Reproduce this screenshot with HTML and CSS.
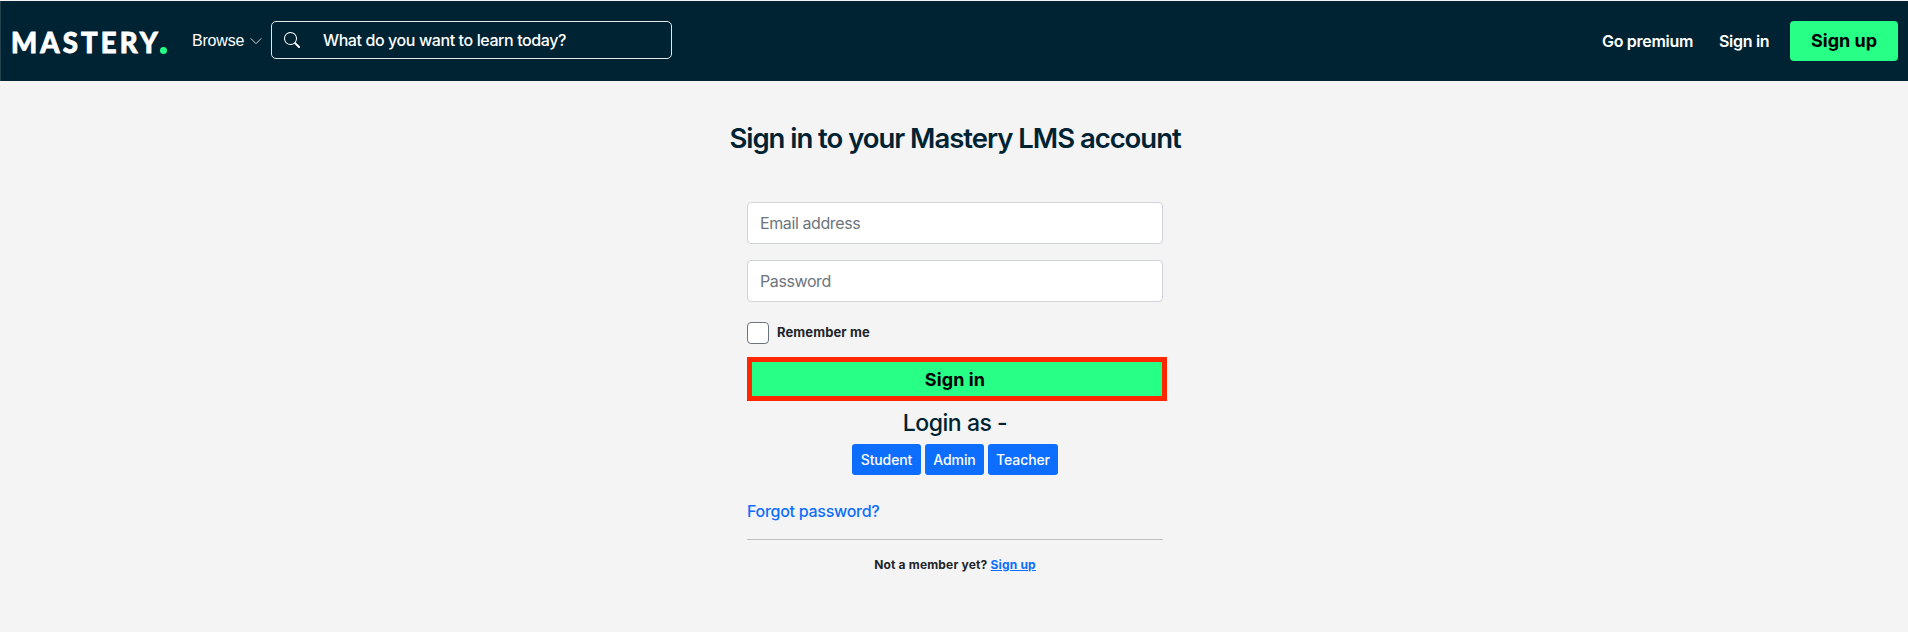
FILE: index.html
```html
<!DOCTYPE html>
<html lang="en">
<head>
<meta charset="utf-8">
<title>Mastery LMS - Sign in</title>
<link rel="stylesheet" href="styles.css">
</head>
<body>
<header class="navbar">
  <a class="brand">MASTERY<span class="brand-dot"></span></a>
  <a class="browse">Browse
    <svg class="chevron" width="12" height="12" viewBox="0 0 16 16" fill="none" stroke="currentColor" stroke-width="1.1" stroke-linecap="round" stroke-linejoin="round"><path d="M1.5 5 8 11.5 14.500 5"/></svg>
  </a>
  <div class="search">
    <svg width="16" height="16" viewBox="0 0 16 16" fill="currentColor"><path d="M11.742 10.344a6.500 6.500 0 1 0-1.397 1.398h-.001c.03.04.062.078.098.115l3.850 3.850a1 1 0 0 0 1.415-1.414l-3.850-3.850a1.007 1.007 0 0 0-.115-.1zM12 6.500a5.500 5.500 0 1 1-11 0 5.500 5.500 0 0 1 11 0z"/></svg>
    <span class="search-text">What do you want to learn today?</span>
  </div>
  <nav class="links">
    <a class="link premium">Go premium</a>
    <a class="link signin">Sign in</a>
    <a class="signup">Sign up</a>
  </nav>
</header>
<main class="page">
  <h1 class="title"><span>Sign in to your Mastery LMS account</span></h1>
  <form class="form">
    <div class="field email">Email address</div>
    <div class="field password">Password</div>
    <label class="remember"><span class="checkbox"></span><span class="remember-text">Remember me</span></label>
    <div class="submit"><span>Sign in</span></div>
    <h2 class="login-as"><span>Login as -</span></h2>
    <div class="roles">
      <a class="role student">Student</a>
      <a class="role admin">Admin</a>
      <a class="role teacher">Teacher</a>
    </div>
    <a class="forgot">Forgot password?</a>
    <div class="divider"></div>
    <p class="member"><span>Not a member yet?</span> <a class="join">Sign up</a></p>
  </form>
</main>
</body>
</html>
```
FILE: styles.css
```css
* { box-sizing: border-box; }
body { margin: 0; height: 632px; overflow: hidden; background: #f4f4f4; color: #212529; font-family: Inter, "Liberation Sans", sans-serif; font-size: 16px; white-space: nowrap; }
.navbar { display: flex; height: 81px; padding: 20px 10px 0 11px; background: #002333; border-top: 1px solid #f4f4f4; box-shadow: inset 1px 0 #24414d; color: #fff; }
.brand { display: flex; width: 181px; font: 900 27.500px/44px Lato, sans-serif; letter-spacing: 3.150px; -webkit-text-stroke: 0.800px #fff; }
.brand-dot { flex: none; width: 7px; height: 7px; margin: 26px 0 0 -1px; border-radius: 50%; background: #28ff86; }
.browse { display: flex; width: 79px; font: 16px/40px "Liberation Sans", Arial, sans-serif; letter-spacing: -0.200px; }
.chevron { margin: 14px 0 0 6px; }
.search { display: flex; width: 401px; height: 38px; padding: 10px 12px; border: 1px solid #e4e8ea; border-radius: 5px; }
.search-text { margin-left: 23px; font-weight: 500; line-height: 18px; margin-top: -1px; letter-spacing: -0.400px; }
.links { display: flex; margin-left: auto; line-height: 40px; font-weight: 600; }
.premium { width: 117px; letter-spacing: -0.300px; }
.signin { width: 71px; letter-spacing: -0.300px; }
.signup { width: 108px; height: 40px; border-radius: 4px; background: #28ff86; color: #000; text-align: center; font-size: 18px; font-weight: 700; line-height: 40px; }
.page { display: flex; flex-direction: column; align-items: center; padding: 37px 0 0 2px; }
.title { margin: 0 0 44px; color: #002333; font-size: 27.500px; font-weight: 600; line-height: 40px; letter-spacing: -1.030px; }
.form { display: flex; flex-direction: column; width: 416px; }
.field { height: 42px; margin-bottom: 16px; padding: 0 12px; border: 1px solid #ced4da; border-radius: 4px; background: #fff; color: #6c757d; line-height: 41px; letter-spacing: -0.400px; }
.remember { display: flex; height: 22px; margin: 4px 0 13px; gap: 8px; }
.checkbox { width: 22px; height: 22px; border: 1px solid #6c757d; border-radius: 4px; background: #fff; }
.remember-text { font-size: 13px; font-weight: 700; line-height: 21px; letter-spacing: 0.120px; }
.submit { width: 420px; height: 44px; border: 5px solid #ff2600; background: #28ff86; color: #000; text-align: center; padding-right: 4px; font-size: 18px; font-weight: 700; line-height: 35px; letter-spacing: 0.100px; }
.login-as { margin: 8px 0 7px; color: #002333; text-align: center; font-size: 23px; font-weight: 500; line-height: 28px; letter-spacing: -0.450px; }
.roles { display: flex; justify-content: center; gap: 4px; }
.role { height: 31px; border-radius: 3px; background: #0d6efd; color: #fff; text-align: center; font-size: 14px; font-weight: 500; line-height: 32px; letter-spacing: -0.100px; }
.student { width: 69px; }
.admin { width: 59px; }
.teacher { width: 70px; }
.forgot { margin-top: 24px; color: #0d6efd; font-weight: 500; line-height: 24px; letter-spacing: -0.280px; align-self: flex-start; }
.divider { height: 1px; margin-top: 16px; background: #bdbebf; }
.member { margin: 15px 0 0; text-align: center; font-size: 12px; font-weight: 700; line-height: 20px; letter-spacing: 0.180px; }
.join { color: #0d6efd; text-decoration: underline; }
```
